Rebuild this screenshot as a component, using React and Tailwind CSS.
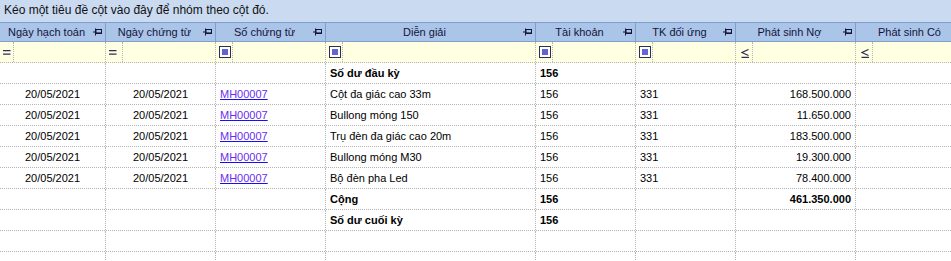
import React from 'react'

const cols = [
  { key: 'ngayHT', title: 'Ngày hạch toán', w: 'w-[106px]', op: 'eq', opW: 'w-[14px]', align: 'center' },
  { key: 'ngayCT', title: 'Ngày chứng từ', w: 'w-[110px]', op: 'eq', align: 'center' },
  { key: 'soCT', title: 'Số chứng từ', w: 'w-[110px]', op: 'check', align: 'left' },
  { key: 'dienGiai', title: 'Diễn giải', w: 'w-[210px]', op: 'check', align: 'left' },
  { key: 'tk', title: 'Tài khoản', w: 'w-[100px]', op: 'check', align: 'left' },
  { key: 'tkdu', title: 'TK đối ứng', w: 'w-[100px]', op: 'check', align: 'left' },
  { key: 'no', title: 'Phát sinh Nợ', w: 'w-[120px]', op: 'le', align: 'right' },
  { key: 'co', title: 'Phát sinh Có', w: 'w-[120px]', op: 'le', align: 'right' },
]

const rows = [
  { dienGiai: 'Số dư đầu kỳ', tk: '156', bold: true },
  { ngayHT: '20/05/2021', ngayCT: '20/05/2021', soCT: 'MH00007', dienGiai: 'Cột đa giác cao 33m', tk: '156', tkdu: '331', no: '168.500.000' },
  { ngayHT: '20/05/2021', ngayCT: '20/05/2021', soCT: 'MH00007', dienGiai: 'Bullong móng 150', tk: '156', tkdu: '331', no: '11.650.000' },
  { ngayHT: '20/05/2021', ngayCT: '20/05/2021', soCT: 'MH00007', dienGiai: 'Trụ đèn đa giác cao 20m', tk: '156', tkdu: '331', no: '183.500.000' },
  { ngayHT: '20/05/2021', ngayCT: '20/05/2021', soCT: 'MH00007', dienGiai: 'Bullong móng M30', tk: '156', tkdu: '331', no: '19.300.000' },
  { ngayHT: '20/05/2021', ngayCT: '20/05/2021', soCT: 'MH00007', dienGiai: 'Bộ đèn pha Led', tk: '156', tkdu: '331', no: '78.400.000' },
  { dienGiai: 'Cộng', tk: '156', no: '461.350.000', bold: true },
  { dienGiai: 'Số dư cuối kỳ', tk: '156', bold: true },
  {},
  {},
]

function PinIcon() {
  return (
    <svg width="9" height="8" viewBox="0 0 9 8" className="shrink-0">
      <path d="M0 4H2.5M2.5 0.5V7.5" stroke="#14143c" strokeWidth="1" fill="none" />
      <rect x="3" y="1.5" width="5.5" height="4" stroke="#14143c" strokeWidth="1" fill="none" />
      <path d="M3 5H9" stroke="#14143c" strokeWidth="1.2" />
    </svg>
  )
}

function OpCell({ op }) {
  if (op === 'check') {
    return (
      <span className="w-[12px] h-[12px] border border-[#2e2e5c] bg-white flex items-center justify-center">
        <span className="w-[6px] h-[6px] bg-[#6464d2]" />
      </span>
    )
  }
  if (op === 'le') {
    // "≤" operator glyph
    return (
      <svg width="8" height="9" viewBox="0 0 8 9" className="ml-[2px] mt-[2px]">
        <path d="M7.5 0.5L1 3.5L7.5 6.5" stroke="#2e2e5c" strokeWidth="1.2" fill="none" />
        <path d="M0.5 8.4H8" stroke="#2e2e5c" strokeWidth="1.3" />
      </svg>
    )
  }
  return (
    <svg width="8" height="5" viewBox="0 0 8 5" className="mt-[1px]">
      <path d="M0 0.7H7.5M0 4.2H7.5" stroke="#2e2e5c" strokeWidth="1.3" />
    </svg>
  )
}

const alignCls = {
  left: 'justify-start pl-[4px]',
  center: 'justify-center',
  right: 'justify-end pr-[4px]',
}

export default function App() {
  return (
    <div
      className="w-[951px] h-[261px] overflow-hidden bg-white text-[11px] text-black"
      style={{ fontFamily: '"Liberation Sans", Arial, sans-serif' }}
    >
      {/* group-by panel */}
      <div className="h-[22px] bg-[#c9daf1] px-[4px] pt-[1px] text-[12px] text-[#111]">
        Kéo một tiêu đề cột vào đây để nhóm theo cột đó.
      </div>

      {/* column headers */}
      <div className="flex h-[20px] bg-[#aac5e8] border-t border-b border-[#7f9fd0] whitespace-nowrap">
        {cols.map((c) => (
          <div key={c.key} className={`${c.w} shrink-0 flex items-center border-r border-[#7f9fd0] text-[#14143c]`}>
            <span className="flex-1 text-center">{c.title}</span>
            <span className="mr-[3px]">
              <PinIcon />
            </span>
          </div>
        ))}
      </div>

      {/* filter row */}
      <div className="flex h-[21px] bg-[#ffffe1] border-b border-dotted border-[#b4b4b4]">
        {cols.map((c) => (
          <div key={c.key} className={`${c.w} shrink-0 flex border-r border-dotted border-[#b4b4b4]`}>
            <div className={`${c.opW || 'w-[17px]'} shrink-0 flex items-center pl-[3px] border-r border-dotted border-[#b4b4b4]`}>
              <OpCell op={c.op} />
            </div>
          </div>
        ))}
      </div>

      {/* data rows */}
      {rows.map((r, i) => (
        <div key={i} className="flex h-[21px] border-b border-dotted border-[#b4b4b4] whitespace-nowrap">
          {cols.map((c) => (
            <div
              key={c.key}
              className={`${c.w} shrink-0 flex items-center border-r border-dotted border-[#b4b4b4] ${alignCls[c.align]} ${r.bold ? 'font-bold' : ''}`}
            >
              {c.key === 'soCT' && r.soCT ? (
                <span className="text-[#6a2cf0] underline decoration-[#1010ff]">{r.soCT}</span>
              ) : (
                r[c.key] || ''
              )}
            </div>
          ))}
        </div>
      ))}
    </div>
  )
}
